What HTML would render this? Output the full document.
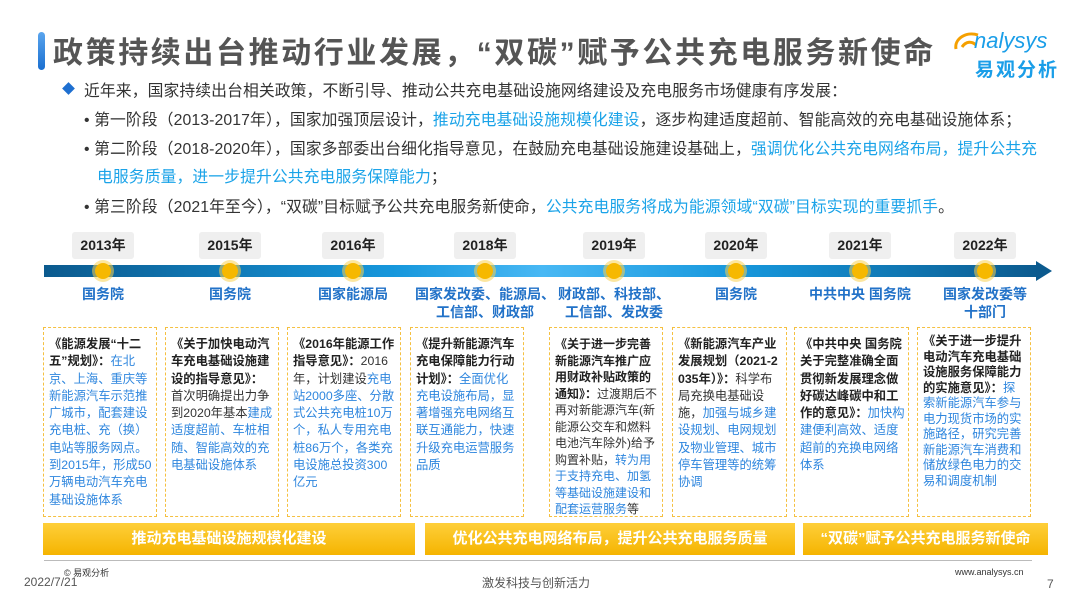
<!DOCTYPE html>
<html><head><meta charset="utf-8"><style>
*{margin:0;padding:0;box-sizing:border-box}
body{width:1080px;height:608px;overflow:hidden;background:#fff;font-family:"Liberation Sans","Noto Sans CJK SC",sans-serif;position:relative;color:#333}
.a{position:absolute;white-space:nowrap}
.b{color:#1aa3e8}
.ln{position:absolute;left:84px;white-space:nowrap;font-size:15.8px;letter-spacing:0.1px}
.yr{position:absolute;top:232px;width:62px;height:27px;margin-left:-31px;background:#efefef;border-radius:3px;font-weight:bold;font-size:14px;line-height:27px;text-align:center;color:#222}
.dot{position:absolute;top:263px;width:16px;height:16px;margin-left:-8px;border-radius:50%;background:#f6b800;box-shadow:0 0 0 3px rgba(250,210,80,.55)}
.lb{position:absolute;top:285px;width:140px;margin-left:-70px;text-align:center;color:#2272c8;font-weight:bold;font-size:14px;line-height:18px}
.bx{position:absolute;top:327px;height:190px;border:1px dashed #f5c040;padding:8px 3px 0 5px;font-size:12.3px;line-height:17.3px;color:#333;white-space:normal;word-break:break-all;overflow:hidden}
.bx b{color:#222}
.bx span{color:#2e86de}
.bn{position:absolute;top:523px;height:32px;background:linear-gradient(#fecf3a,#f5b400);color:#fff;font-weight:bold;font-size:15px;line-height:32px;text-align:center}
</style></head><body>
<div class="a" style="left:38px;top:32px;width:7px;height:38px;border-radius:4px;background:linear-gradient(#5aa5ee,#1a6fd0)"></div>
<div class="a" style="left:53px;top:28px;font-size:30px;font-weight:bold;color:#555;letter-spacing:2.6px">政策持续出台推动行业发展，“双碳”赋予公共充电服务新使命</div>
<svg class="a" style="left:952px;top:27px" width="30" height="28"><path d="M4 22 C2 12 14 4 26 8 M10 20 C14 14 20 14 24 18" stroke="#f5a000" stroke-width="3" fill="none"/></svg>
<div class="a" style="left:974px;top:28px;font-size:22px;font-style:italic;color:#1a9ee8">nalysys</div>
<div class="a" style="left:975px;top:55px;font-size:19px;font-weight:bold;color:#1a9ee8;letter-spacing:2px">易观分析</div>

<div class="a" style="left:64px;top:84px;width:9px;height:9px;background:#1e6fd0;transform:rotate(45deg)"></div>
<div class="ln" style="top:78px">近年来，国家持续出台相关政策，不断引导、推动公共充电基础设施网络建设及充电服务市场健康有序发展：</div>
<div class="ln" style="top:107px">• 第一阶段（2013-2017年），国家加强顶层设计，<span class="b">推动充电基础设施规模化建设</span>，逐步构建适度超前、智能高效的充电基础设施体系；</div>
<div class="ln" style="top:136px">• 第二阶段（2018-2020年），国家多部委出台细化指导意见，在鼓励充电基础设施建设基础上，<span class="b">强调优化公共充电网络布局，提升公共充</span></div>
<div class="ln" style="top:164px;left:97px"><span class="b">电服务质量，进一步提升公共充电服务保障能力</span>；</div>
<div class="ln" style="top:194px">• 第三阶段（2021年至今），“双碳”目标赋予公共充电服务新使命，<span class="b">公共充电服务将成为能源领域“双碳”目标实现的重要抓手</span>。</div>

<div class="a" style="left:44px;top:265px;width:996px;height:12px;background:linear-gradient(90deg,#0b5a8e,#1697dc 35%,#48b8f4 50%,#1697dc 70%,#0b5a8e)"></div>
<svg class="a" style="left:1036px;top:261px" width="18" height="20"><path d="M0 0L16 10L0 20Z" fill="#0b5a8e"/></svg>

<div class="yr" style="left:103px">2013年</div><div class="yr" style="left:230px">2015年</div><div class="yr" style="left:353px">2016年</div><div class="yr" style="left:485px">2018年</div><div class="yr" style="left:614px">2019年</div><div class="yr" style="left:736px">2020年</div><div class="yr" style="left:860px">2021年</div><div class="yr" style="left:985px">2022年</div>
<div class="dot" style="left:103px"></div><div class="dot" style="left:230px"></div><div class="dot" style="left:353px"></div><div class="dot" style="left:485px"></div><div class="dot" style="left:614px"></div><div class="dot" style="left:736px"></div><div class="dot" style="left:860px"></div><div class="dot" style="left:985px"></div>
<div class="lb" style="left:103px">国务院</div><div class="lb" style="left:230px">国务院</div><div class="lb" style="left:353px">国家能源局</div><div class="lb" style="left:485px">国家发改委、能源局、<br>工信部、财政部</div><div class="lb" style="left:614px">财政部、科技部、<br>工信部、发改委</div><div class="lb" style="left:736px">国务院</div><div class="lb" style="left:860px">中共中央 国务院</div><div class="lb" style="left:985px">国家发改委等<br>十部门</div>

<div class="bx" style="left:43px;width:114px"><b>《能源发展“十二五”规划》：</b><span>在北京、上海、重庆等新能源汽车示范推广城市，配套建设充电桩、充（换）电站等服务网点。到2015年，形成50万辆电动汽车充电基础设施体系</span></div>
<div class="bx" style="left:165px;width:114px"><b>《关于加快电动汽车充电基础设施建设的指导意见》：</b>首次明确提出力争到2020年基本<span>建成适度超前、车桩相随、智能高效的充电基础设施体系</span></div>
<div class="bx" style="left:287px;width:114px"><b>《2016年能源工作指导意见》：</b>2016年，计划建设<span>充电站2000多座、分散式公共充电桩10万个，私人专用充电桩86万个，各类充电设施总投资300亿元</span></div>
<div class="bx" style="left:410px;width:114px"><b>《提升新能源汽车充电保障能力行动计划》：</b><span>全面优化充电设施布局，显著增强充电网络互联互通能力，快速升级充电运营服务品质</span></div>
<div class="bx" style="left:549px;width:114px;line-height:16.5px;font-size:12px"><b>《关于进一步完善新能源汽车推广应用财政补贴政策的通知》：</b>过渡期后不再对新能源汽车(新能源公交车和燃料电池汽车除外)给予购置补贴，<span>转为用于支持充电、加氢等基础设施建设和配套运营服务</span>等</div>
<div class="bx" style="left:672px;width:115px"><b>《新能源汽车产业发展规划（2021-2035年）》：</b>科学布局充换电基础设施，<span>加强与城乡建设规划、电网规划及物业管理、城市停车管理等的统筹协调</span></div>
<div class="bx" style="left:794px;width:115px"><b>《中共中央 国务院关于完整准确全面贯彻新发展理念做好碳达峰碳中和工作的意见》：</b><span>加快构建便利高效、适度超前的充换电网络体系</span></div>
<div class="bx" style="left:917px;width:114px;line-height:15.5px;padding-top:6px"><b>《关于进一步提升电动汽车充电基础设施服务保障能力的实施意见》：</b><span>探索新能源汽车参与电力现货市场的实施路径，研究完善新能源汽车消费和储放绿色电力的交易和调度机制</span></div>

<div class="bn" style="left:43px;width:372px">推动充电基础设施规模化建设</div>
<div class="bn" style="left:425px;width:370px">优化公共充电网络布局，提升公共充电服务质量</div>
<div class="bn" style="left:803px;width:245px">“双碳”赋予公共充电服务新使命</div>

<div class="a" style="left:44px;top:560px;width:988px;height:1px;background:#bbb"></div>
<div class="a" style="left:64px;top:566px;font-size:9px;color:#333">© 易观分析</div>
<div class="a" style="left:24px;top:575px;font-size:12px;color:#555">2022/7/21</div>
<div class="a" style="left:482px;top:574px;font-size:12px;color:#555">激发科技与创新活力</div>
<div class="a" style="left:955px;top:567px;font-size:9px;color:#333">www.analysys.cn</div>
<div class="a" style="left:1047px;top:577px;font-size:12px;color:#555">7</div>
</body></html>
